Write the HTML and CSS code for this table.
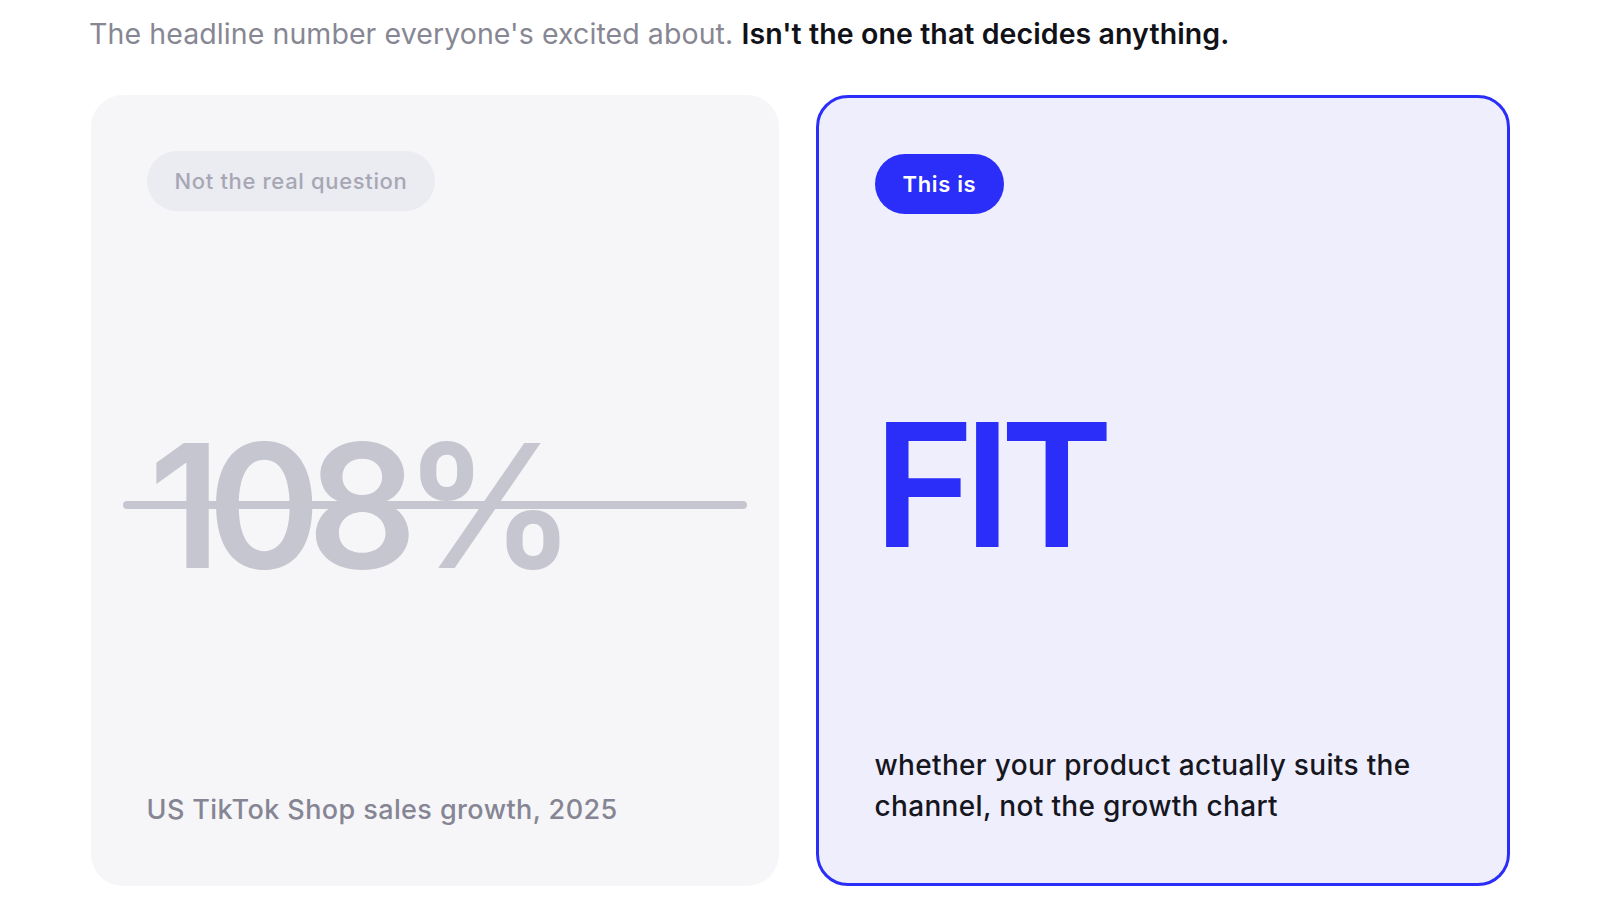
FILE: index.html
```html
<!DOCTYPE html>
<html lang="en">
<head>
<meta charset="utf-8">
<title>Fit vs growth</title>
<link rel="stylesheet" href="styles.css">
</head>
<body>
<main class="page">
  <p class="headline"><span class="muted">The headline number everyone's excited about.</span> <strong class="strong">Isn't the one that decides anything.</strong></p>
  <section class="cards">
    <article class="card card-muted">
      <span class="pill pill-muted">Not the real question</span>
      <div class="big big-muted"><span class="big-text">108%</span></div>
      <p class="caption caption-muted">US TikTok Shop sales growth, 2025</p>
    </article>
    <article class="card card-accent">
      <span class="pill pill-accent">This is</span>
      <div class="big big-accent">FIT</div>
      <p class="caption caption-accent">whether your product actually suits the channel, not the growth chart</p>
    </article>
  </section>
</main>
</body>
</html>
```

FILE: styles.css
```css
* { box-sizing: border-box; }
html, body {
  margin: 0;
  padding: 0;
  background: #ffffff;
}
body {
  font-family: Inter, "Liberation Sans", sans-serif;
  color: #14141c;
  width: 1600px;
  height: 900px;
  overflow: hidden;
}
.page {
  padding: 16px 0 0 0;
}
.headline {
  margin: 0 0 43px 0;
  padding-left: 89px;
  font-size: 28.5px;
  line-height: 36px;
  letter-spacing: 0.003em;
}
.muted {
  color: #878794;
  font-weight: 400;
}
.strong {
  color: #111118;
  font-weight: 600;
}
.cards {
  display: grid;
  grid-template-columns: 688px 694px;
  column-gap: 37px;
  justify-content: center;
  height: 791px;
}
.card {
  display: flex;
  flex-direction: column;
  justify-content: space-between;
  align-items: flex-start;
  padding: 56px;
  border-radius: 32px;
  min-width: 0;
}
.card-muted {
  background: #f6f6f9;
}
.card-accent {
  background: #eeeefd;
  border: 3px solid #2b2ef9;
}
.pill {
  display: inline-flex;
  align-items: center;
  height: 60px;
  padding: 0 28px;
  border-radius: 30px;
  font-size: 22px;
  line-height: 1;
  letter-spacing: 0.03em;
}
.pill-muted {
  background: #ebebf2;
  color: #a7a7b4;
  font-weight: 500;
}
.pill-accent {
  background: #2b2ef9;
  color: #ffffff;
  font-weight: 600;
}
.big {
  font-size: 172px;
  line-height: 1;
  font-weight: 600;
  margin-top: 8px;
}
.big-muted {
  position: relative;
  align-self: stretch;
  color: #c6c6d0;
  padding-left: 2px;
  letter-spacing: -0.08em;
}
.big-muted::after {
  content: "";
  position: absolute;
  left: -24px;
  right: -24px;
  top: 50%;
  height: 8px;
  margin-top: -4px;
  border-radius: 4px;
  background: #c6c6d0;
}
.big-accent {
  color: #2b2ef9;
  margin-left: -1px;
  letter-spacing: -0.065em;
}
.caption {
  margin: 0;
  font-weight: 500;
}
.caption-muted {
  color: #858594;
  font-size: 27px;
  letter-spacing: 0.015em;
  line-height: 40px;
}
.caption-accent {
  color: #16161e;
  font-size: 28px;
  letter-spacing: 0.012em;
  line-height: 41px;
  max-width: 580px;
}
```
